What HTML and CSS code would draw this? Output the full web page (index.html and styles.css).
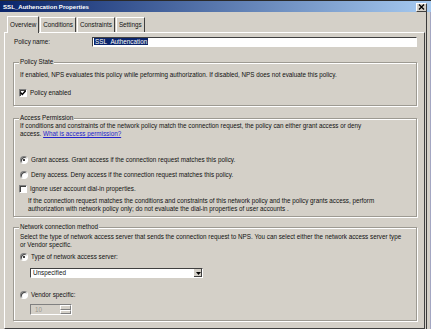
FILE: index.html
```html
<!DOCTYPE html>
<html lang="en">

<head>
    <meta charset="UTF-8" />
    <title>SSL_Authencation Properties</title>
    <link rel="stylesheet" href="styles.css">
</head>

<body>
    <div class="window">
        <div class="titlebar">
            <span class="title">SSL_Authencation Properties</span>
            <span class="close">
                <svg width="7" height="6" viewBox="0 0 7 6">
                    <path d="M1 0.5 L6 5.5 M6 0.5 L1 5.5" stroke="#000" stroke-width="1.3" />
                </svg>
            </span>
        </div>

        <div class="frame">
            <div class="dialog">
                <ul class="tabs">
                    <li class="tab active">Overview</li>
                    <li class="tab">Conditions</li>
                    <li class="tab">Constraints</li>
                    <li class="tab">Settings</li>
                </ul>

                <div class="panel">
                    <div class="name-row">
                        <label for="policy-name">Policy name:</label>
                        <div class="textbox" id="policy-name"><span class="selected">SSL_Authencation</span></div>
                    </div>

                    <fieldset class="group group-state">
                        <legend>Policy State</legend>
                        <p class="info">If enabled, NPS evaluates this policy while peforming authorization. If disabled, NPS does not evaluate this policy.</p>
                        <div class="option option-enabled">
                            <span class="check">
                                <svg width="6" height="6" viewBox="0 0 6 6">
                                    <path d="M0.5 2.5 L2.3 4.4 L5.6 0.8" fill="none" stroke="#000" stroke-width="1.4" />
                                </svg>
                            </span>
                            Policy enabled
                        </div>
                    </fieldset>

                    <fieldset class="group group-access">
                        <legend>Access Permission</legend>
                        <p class="info">If conditions and constraints of the network policy match the connection request, the policy can either grant access or deny<br>access. <a href="">What is access permission?</a></p>
                        <div class="option option-grant"><span class="radio on"></span>Grant access. Grant access if the connection request matches this policy.</div>
                        <div class="option option-deny"><span class="radio"></span>Deny access. Deny access if the connection request matches this policy.</div>
                        <div class="option option-ignore"><span class="check"></span>Ignore user account dial-in properties.</div>
                        <p class="info info-indent">If the connection request matches the conditions and constraints of this network policy and the policy grants access, perform<br>authorization with network policy only; do not evaluate the dial-in properties of user accounts .</p>
                    </fieldset>

                    <fieldset class="group group-network">
                        <legend>Network connection method</legend>
                        <p class="info">Select the type of network access server that sends the connection request to NPS. You can select either the network access server type<br>or Vendor specific.</p>
                        <div class="option option-type"><span class="radio on"></span>Type of network access server:</div>
                        <div class="select">
                            <span class="select-value">Unspecified</span>
                            <span class="select-button">
                                <svg width="5" height="3" viewBox="0 0 5 3">
                                    <path d="M0 0 H5 L2.5 3 Z" fill="#000" />
                                </svg>
                            </span>
                        </div>
                        <div class="option option-vendor"><span class="radio"></span>Vendor specific:</div>
                        <div class="spin">
                            <span class="spin-value">10</span>
                            <span class="spin-buttons">
                                <span class="spin-up"></span>
                                <span class="spin-down"></span>
                            </span>
                        </div>
                    </fieldset>
                </div>
            </div>
            <div class="edge"></div>
        </div>
    </div>
</body>

</html>
```

FILE: styles.css
```css
:root {
    --bg-face: #d4d0c8;
    --line-dark: #808080;
    --line-darker: #404040;
    --line-light: #ffffff;
    --title-start: #0a246a;
    --title-end: #a6caf0;
    --select-bg: #0a246a;
    --text: #111111;
}

body {
    margin: 0;
    font-family: "Liberation Sans", Arial, sans-serif;
    font-size: 6.3px;
    line-height: 8px;
    color: var(--text);
    background-color: var(--bg-face);
}

.window {
    width: 431px;
    height: 329px;
    overflow: hidden;
    display: flex;
    flex-direction: column;
}

.titlebar {
    height: 11px;
    border-top: 1px solid #2a2a2a;
    background: linear-gradient(to right, var(--title-start), var(--title-end));
    display: flex;
    align-items: center;
    justify-content: space-between;
    padding: 0 4px 0 3px;

    .title {
        color: #ffffff;
        font-weight: bold;
        font-size: 6.1px;
    }

    .close {
        width: 9px;
        height: 7px;
        background-color: var(--bg-face);
        border: 1px solid;
        border-color: var(--line-light) var(--line-darker) var(--line-darker) var(--line-light);
        display: flex;
        align-items: center;
        justify-content: center;
        margin-top: 1px;
    }
}

.frame {
    flex: 1;
    display: flex;
}

.dialog {
    width: 421px;
    padding-left: 4px;
    display: flex;
    flex-direction: column;
}

.edge {
    flex: 1;
    border-left: 1px solid #3a3a3a;
    margin-left: 1px;
    background: linear-gradient(to right, var(--bg-face) 3px, #a3a6c2 3px);
}

/* Tabs */
.tabs {
    list-style: none;
    margin: 0;
    padding: 4px 0 0 3px;
    display: flex;
    height: 16px;
    align-items: flex-end;

    .tab {
        height: 14px;
        line-height: 14px;
        padding: 0 2px;
        border-left: 1px solid var(--line-light);
        border-right: 1px solid var(--line-darker);
        border-top: 1px solid var(--line-light);
        margin-right: 1px;
    }

    .active {
        height: 16px;
        line-height: 15px;
        margin-bottom: -1px;
        background-color: var(--bg-face);
        position: relative;
        z-index: 1;
    }
}

/* Tab page */
.panel {
    flex: 1;
    border: 1px solid;
    border-color: var(--line-light) var(--line-darker) var(--line-darker) var(--line-light);
    padding: 4px 7px 0 8px;
}

.name-row {
    display: flex;
    height: 10px;
    line-height: 10px;

    label {
        width: 78px;
        padding-left: 1px;
    }

    .textbox {
        flex: 1;
        background-color: #ffffff;
        border: 1px solid;
        border-color: var(--line-darker) var(--line-light) var(--line-light) var(--line-darker);
        line-height: 8px;
        padding-left: 1px;
    }

    .selected {
        background-color: var(--select-bg);
        color: #ffffff;
        padding: 0 1px;
    }
}

/* Group boxes */
.group {
    margin: 0;
    padding: 0 6px;
    border: 1px solid #9d9a92;
    box-shadow: inset 1px 1px 0 var(--line-light), 1px 1px 0 var(--line-light);

    legend {
        padding: 0 1px;
        margin-left: -1px;
        background-color: var(--bg-face);
    }
}

.info {
    margin: 0;
    white-space: nowrap;

    a {
        color: #2222cc;
    }
}

.info-indent {
    padding-left: 8px;
}

.option {
    display: flex;
    align-items: center;
    height: 8px;
    gap: 3px;
}

.check {
    width: 6px;
    height: 6px;
    background-color: #ffffff;
    border: 1px solid;
    border-color: var(--line-dark) var(--line-light) var(--line-light) var(--line-dark);
    box-shadow: inset 1px 1px 0 var(--line-darker);
    display: flex;
    align-items: center;
    justify-content: center;
    margin-left: -1px;
}

.radio {
    width: 6px;
    height: 6px;
    border-radius: 50%;
    background-color: #ffffff;
    border: 1px solid;
    border-color: var(--line-dark) var(--line-light) var(--line-light) var(--line-dark);
    box-shadow: inset 1px 1px 0 var(--line-darker);
    display: flex;
    align-items: center;
    justify-content: center;
}

.radio.on::after {
    content: "";
    width: 2px;
    height: 2px;
    border-radius: 50%;
    background-color: #000000;
}

.group-state {
    margin-top: 11px;
    padding-bottom: 8px;

    .info {
        margin-top: 5px;
    }

    .option-enabled {
        margin-top: 10px;
    }
}

.group-access {
    margin-top: 8px;
    padding-bottom: 3px;

    .option-grant {
        margin-top: 18px;
    }

    .option-deny {
        margin-top: 7px;
    }

    .option-ignore {
        margin-top: 6px;
    }

    .info-indent {
        margin-top: 4px;
    }
}

.group-network {
    margin-top: 6px;
    padding-bottom: 5px;

    .info {
        margin-top: 2px;
    }

    .option-type {
        margin-top: 4px;
    }

    .option-vendor {
        margin-top: 13px;
    }
}

/* Combo box */
.select {
    width: 171px;
    height: 8px;
    margin: 7px 0 0 10px;
    background-color: #ffffff;
    border: 1px solid;
    border-color: var(--line-darker) var(--line-light) var(--line-light) var(--line-darker);
    display: flex;
    justify-content: space-between;

    .select-value {
        padding-left: 2px;
    }

    .select-button {
        width: 8px;
        height: 8px;
        background-color: var(--bg-face);
        border-left: 1px solid var(--line-light);
        box-shadow: inset -1px -1px 0 var(--line-darker);
        display: flex;
        align-items: center;
        justify-content: center;
    }
}

/* Spin box (disabled) */
.spin {
    width: 40px;
    height: 9px;
    margin: 5px 0 0 10px;
    border: 1px solid;
    border-color: var(--line-dark) var(--line-light) var(--line-light) var(--line-dark);
    display: flex;
    justify-content: space-between;
    color: #9a978f;

    .spin-value {
        padding-left: 4px;
        line-height: 9px;
    }

    .spin-buttons {
        width: 11px;
        display: flex;
        flex-direction: column;
    }

    .spin-up,
    .spin-down {
        flex: 1;
        border: 1px solid;
        border-color: var(--line-light) var(--line-dark) var(--line-dark) var(--line-light);
    }
}
```
